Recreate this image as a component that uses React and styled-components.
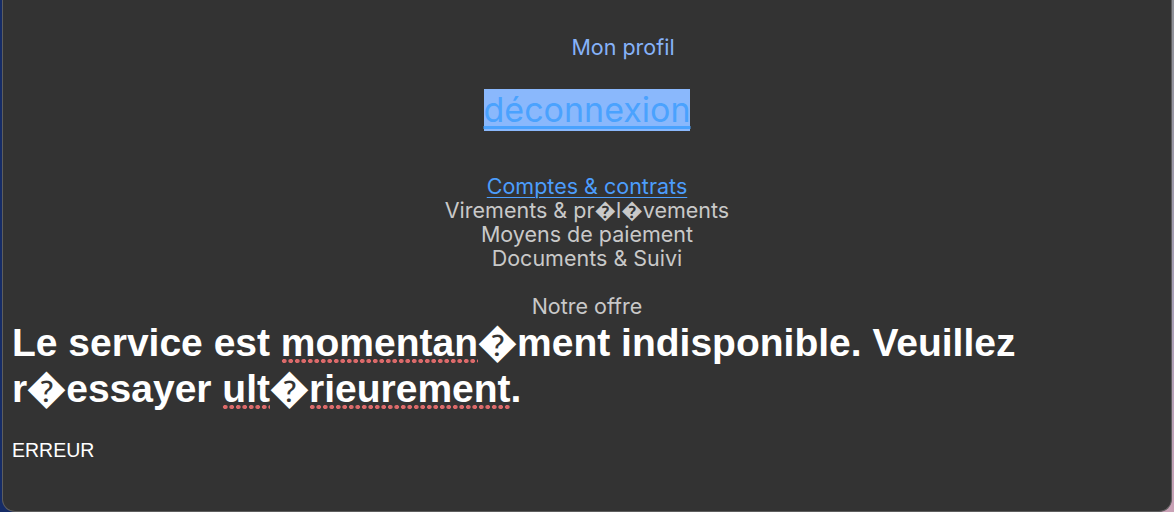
import React from "react";
import styled, { createGlobalStyle } from "styled-components";

const GlobalStyle = createGlobalStyle`
  html, body {
    margin: 0;
    padding: 0;
    height: 512px;
    overflow: hidden;
  }
  body {
    background:
      linear-gradient(90deg, #162c66 0 50%, transparent 50%),
      linear-gradient(180deg, #8e9096 0%, #a9a0b8 60%, #c9a2b6 100%);
  }
`;

function App() {
  return (
    <>
      <GlobalStyle />
      <Window>
        <Menu>
          <ProfileLink>Mon profil</ProfileLink>
          <Logout>
            <Selected>déconnexion</Selected>
          </Logout>
          <Group>
            <MenuLink>Comptes &amp; contrats</MenuLink>
            <MenuItem>Virements &amp; pr{"\uFFFD"}l{"\uFFFD"}vements</MenuItem>
            <MenuItem>Moyens de paiement</MenuItem>
            <MenuItem>Documents &amp; Suivi</MenuItem>
          </Group>
          <MenuItem>Notre offre</MenuItem>
        </Menu>
        <ErrorTitle>
          Le service est <Misspelled>momentan</Misspelled>{"\uFFFD"}ment indisponible.
          Veuillez r{"\uFFFD"}essayer <Misspelled>ult</Misspelled>{"\uFFFD"}
          <Misspelled>rieurement</Misspelled>.
        </ErrorTitle>
        <ErrorCode>ERREUR</ErrorCode>
      </Window>
    </>
  );
}

export default App;

const Window = styled.div`
  box-sizing: border-box;
  margin-left: 2px;
  width: 1170px;
  height: 512px;
  background: #333333;
  border-left: 1px solid #5e5e5e;
  border-right: 1px solid #5e5e5e;
  border-bottom: 1px solid #5e5e5e;
  border-bottom-left-radius: 13px;
  border-bottom-right-radius: 13px;
  padding: 35px 0 0 9px;
  color: #ffffff;
  font-family: "Liberation Sans", Arial, sans-serif;
`;

const Menu = styled.nav`
  display: flex;
  flex-direction: column;
  align-items: center;
  margin-left: -9px;
  font-family: Inter, "Noto Sans", sans-serif;
  font-size: 21.5px;
  line-height: 24px;
  color: #c9c9c9;
`;

const ProfileLink = styled.div`
  padding-left: 72px;
  color: #86b2f9;
`;

const Logout = styled.div`
  margin-top: 30px;
  font-size: 34px;
  line-height: 42px;
`;

const Selected = styled.span`
  display: inline-block;
  background: #8ab8fc;
  color: #4aa2fe;
  text-decoration: underline;
  text-decoration-thickness: 3px;
  text-underline-offset: 4px;
`;

const Group = styled.div`
  margin-top: 43px;
  margin-bottom: 24px;
  display: flex;
  flex-direction: column;
  align-items: center;
`;

const MenuLink = styled.div`
  color: #4c9dfc;
  text-decoration: underline;
  text-decoration-thickness: 1px;
  text-underline-offset: 3px;
`;

const MenuItem = styled.div`
  color: #c9c9c9;
`;

const ErrorTitle = styled.h1`
  margin: 2px 0 0;
  font-size: 39px;
  line-height: 46px;
  font-weight: 700;
  color: #ffffff;
`;

const Misspelled = styled.span`
  background-image: radial-gradient(circle, #dc6a6a 2px, transparent 2.5px);
  background-size: 6.5px 6px;
  background-repeat: repeat-x;
  background-position: 0 100%;
`;

const ErrorCode = styled.div`
  margin-top: 28px;
  font-size: 19.5px;
  line-height: 20px;
  color: #ffffff;
`;
